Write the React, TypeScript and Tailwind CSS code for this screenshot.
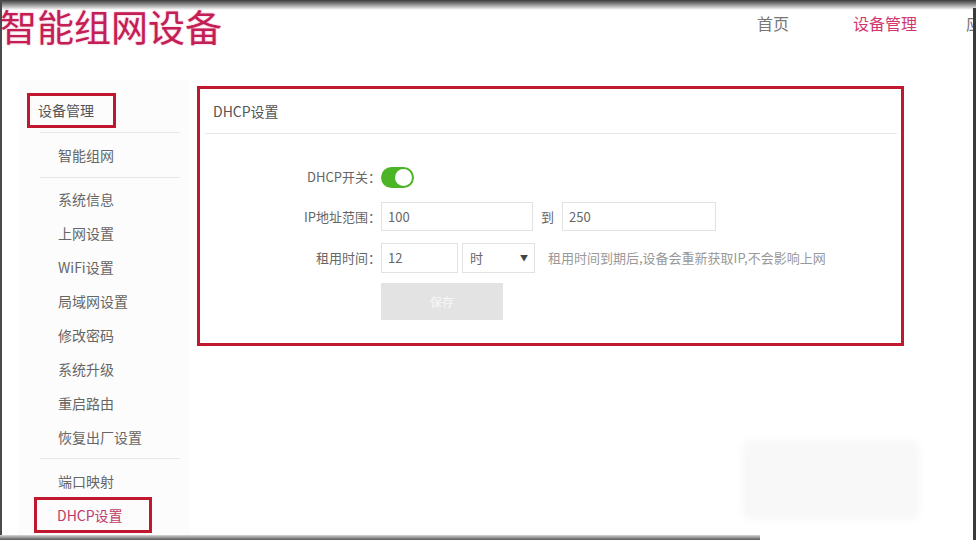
import React from "react";

const menu = ["系统信息", "上网设置", "WiFi设置", "局域网设置", "修改密码", "系统升级", "重启路由", "恢复出厂设置"];

export default function App() {
  return (
    <div className="relative h-[540px] w-[976px] overflow-hidden bg-white font-['Noto_Sans_CJK_SC','Noto_Sans',sans-serif]">
      {/* 画面边缘 */}
      <div className="pointer-events-none absolute left-0 top-0 h-[10px] w-full bg-gradient-to-b from-[#3c3c3c] via-[#9a9a9a] to-transparent" />
      <div className="pointer-events-none absolute left-0 top-0 h-full w-[2px] bg-[#4a4a4a]" />
      <div className="pointer-events-none absolute right-0 top-[8px] h-full w-[3px] bg-[#3a3a3a]" />
      <div className="pointer-events-none absolute bottom-0 left-0 h-[5px] w-[760px] bg-gradient-to-b from-[#d8d8d8] to-[#5a5a5a]" />
      <div className="pointer-events-none absolute bottom-[20px] left-[742px] h-[80px] w-[178px] rounded-[10px] bg-[#f8f8f8] blur-[3px]" />

      {/* 顶部 */}
      <header className="flex h-[80px] items-start">
        <h1 className="mt-[5px] whitespace-nowrap text-[37px] leading-[42px] text-[#c41e56] [text-shadow:0_0_2px_rgba(230,80,130,0.5)]">
          智能组网设备
        </h1>
        <nav className="ml-auto mt-[12px] flex whitespace-nowrap text-[16px] leading-[22px]">
          <span className="w-[96px] text-[#777]">首页</span>
          <span className="w-[113px] text-[#d2366c]">设备管理</span>
          <span className="w-[10px] overflow-hidden text-[#777]">应用</span>
        </nav>
      </header>

      <div className="flex">
        {/* 侧边栏 */}
        <aside className="ml-[18px] h-[460px] w-[172px] bg-[#fcfcfc] pt-[13px] text-[14px] text-[#666]">
          <div className="ml-[9px] flex h-[35px] w-[89px] items-center border-[3px] border-[#c0182f] pl-[8px] text-[#555]">
            设备管理
          </div>
          <div className="ml-[22px] mt-[4px] w-[140px] border-t border-[#e6e6e6]" />
          <div className="flex h-[44px] items-center pl-[40px]">智能组网</div>
          <div className="ml-[22px] w-[140px] border-t border-[#e6e6e6]" />
          <ul className="pt-[4px]">
            {menu.map((m) => (
              <li key={m} className="flex h-[34px] items-center pl-[40px]">
                {m}
              </li>
            ))}
          </ul>
          <div className="ml-[22px] mt-[4px] w-[140px] border-t border-[#e6e6e6]" />
          <div className="flex h-[36px] items-center pl-[40px] pt-[8px]">端口映射</div>
          <div className="ml-[16px] mt-[2px] flex h-[36px] w-[118px] items-center border-[3px] border-[#c0182f] pl-[20px] text-[#c23a6a]">
            DHCP设置
          </div>
        </aside>

        {/* 主区域 */}
        <main className="ml-[7px] mt-[6px] h-[260px] w-[707px] border-[3px] border-[#c0182f] pl-[5px] pr-[4px]">
          <div className="flex h-[45px] items-center border-b border-[#e8e8e8] pl-[8px] text-[14px] text-[#555]">
            DHCP设置
          </div>
          <div className="pl-[72px] pt-[32px] text-[13px] text-[#666]">
            <div className="flex h-[22px] items-center">
              <span className="w-[104px] text-right">DHCP开关：</span>
              <span className="flex h-[21px] w-[33px] items-center justify-end rounded-full bg-[#4cb526] pr-[2px]">
                <span className="h-[17px] w-[17px] rounded-full bg-white" />
              </span>
            </div>
            <div className="mt-[14px] flex h-[29px] items-center">
              <span className="w-[104px] text-right">IP地址范围：</span>
              <span className="flex h-[29px] w-[152px] items-center border border-[#e2e2e2] pl-[6px]">100</span>
              <span className="w-[29px] text-center">到</span>
              <span className="flex h-[29px] w-[154px] items-center border border-[#e2e2e2] pl-[6px]">250</span>
            </div>
            <div className="mt-[12px] flex h-[30px] items-center">
              <span className="w-[104px] text-right">租用时间：</span>
              <span className="flex h-[30px] w-[77px] items-center border border-[#e2e2e2] pl-[6px]">12</span>
              <span className="ml-[4px] flex h-[30px] w-[73px] items-center justify-between border border-[#e2e2e2] pl-[7px] pr-[6px]">
                时<span className="text-[8px] text-[#444]">▼</span>
              </span>
              <span className="ml-[13px] text-[13px] text-[#999]">租用时间到期后,设备会重新获取IP,不会影响上网</span>
            </div>
            <button className="ml-[104px] mt-[10px] h-[37px] w-[122px] bg-[#e3e3e3] text-[12px] text-[#f8f8f8]">
              保存
            </button>
          </div>
        </main>
      </div>
    </div>
  );
}
